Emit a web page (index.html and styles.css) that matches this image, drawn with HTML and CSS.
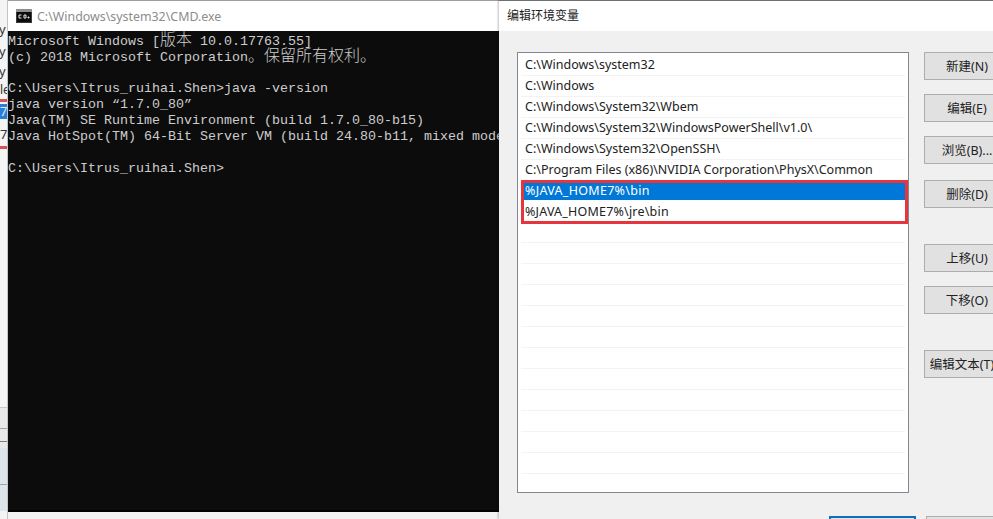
FILE: index.html
```html
<!DOCTYPE html>
<html lang="zh">
<head>
<meta charset="utf-8">
<title>CMD and environment variables</title>
<link rel="stylesheet" href="styles.css">
</head>
<body>
<div class="desk">
  <div class="sliver">
    <div class="sl-band"></div>
    <div class="sl-rule sl-g0"></div>
    <div class="sl-rule sl-g1"></div>
    <div class="sl-rule sl-g2"></div>
    <div class="sl-rule sl-g3"></div>
    <div class="sl sl-a">y</div>
    <div class="sl sl-b">y</div>
    <div class="sl sl-c">y</div>
    <div class="sl sl-d">le</div>
    <div class="sl-red sl-red1"></div>
    <div class="sl sl-sel">7</div>
    <div class="sl sl-e">7</div>
    <div class="sl-red sl-red2"></div>
  </div>
  <div class="cmd">
    <div class="cmd-title">
      <svg class="cmd-icon" width="16" height="16" viewBox="0 0 16 16"><rect x="0" y="1" width="16" height="14" fill="#3a3a3a"/><rect x="0" y="1" width="16" height="3" fill="#8f8f8f"/><rect x="1" y="4" width="14" height="10" fill="#0c0c0c"/><path d="M5.5 7H3v3h2.5M8 7h2v3H8zM12 9h1v1h-1z" fill="none" stroke="#e8e8e8" stroke-width="1"/></svg>
      <span class="cmd-name">C:\Windows\system32\CMD.exe</span>
    </div>
    <div class="term">
      <div class="ln ln-cjk">Microsoft Windows [<span class="cjk">版本</span> 10.0.17763.55]</div>
      <div class="ln ln-cjk">(c) 2018 Microsoft Corporation<span class="cjk">。保留所有权利。</span></div>
      <div class="ln">&nbsp;</div>
      <div class="ln">C:\Users\Itrus_ruihai.Shen&gt;java -version</div>
      <div class="ln">java version “1.7.0_80”</div>
      <div class="ln">Java(TM) SE Runtime Environment (build 1.7.0_80-b15)</div>
      <div class="ln">Java HotSpot(TM) 64-Bit Server VM (build 24.80-b11, mixed mode)</div>
      <div class="ln">&nbsp;</div>
      <div class="ln">C:\Users\Itrus_ruihai.Shen&gt;</div>
    </div>
    <div class="cmd-foot"></div>
  </div>
  <div class="dialog">
    <div class="dlg-title">编辑环境变量</div>
    <div class="dlg-body">
      <div class="main">
        <div class="list">
          <div class="row">C:\Windows\system32</div>
          <div class="row">C:\Windows</div>
          <div class="row">C:\Windows\System32\Wbem</div>
          <div class="row">C:\Windows\System32\WindowsPowerShell\v1.0\</div>
          <div class="row">C:\Windows\System32\OpenSSH\</div>
          <div class="row">C:\Program Files (x86)\NVIDIA Corporation\PhysX\Common</div>
          <div class="marked">
            <div class="row sel">%JAVA_HOME7%\bin</div>
            <div class="row plain">%JAVA_HOME7%\jre\bin</div>
          </div>
          <div class="row"></div><div class="row"></div><div class="row"></div><div class="row"></div>
          <div class="row"></div><div class="row"></div><div class="row"></div><div class="row"></div>
          <div class="row"></div><div class="row"></div><div class="row"></div><div class="row"></div>
          <div class="row"></div>
        </div>
        <div class="side">
          <div class="btn">新建(N)</div>
          <div class="btn">编辑(E)</div>
          <div class="btn">浏览(B)...</div>
          <div class="btn gap1">删除(D)</div>
          <div class="btn gap2">上移(U)</div>
          <div class="btn">下移(O)</div>
          <div class="btn gap2 btn-long">编辑文本(T)</div>
        </div>
      </div>
      <div class="foot">
        <div class="fbtn ok"></div>
        <div class="fbtn cancel"></div>
      </div>
    </div>
  </div>
</div>
</body>
</html>
```
FILE: styles.css
```css
* { box-sizing: border-box; }
html, body { margin: 0; padding: 0; height: 100%; overflow: hidden; background: #f0f0f0; }
.desk { display: flex; width: 993px; height: 519px; overflow: hidden; font-family: "Noto Sans", "Noto Sans CJK SC", sans-serif; }

.sliver { position: relative; width: 8px; flex: none; background: #f4f4f4; border-right: 1px solid #c4c4c4; overflow: hidden; }
.sl { position: absolute; left: -1px; font: 13px/16px "Noto Sans", sans-serif; color: #333; white-space: nowrap; }
.sl-a { top: 21px; } .sl-b { top: 43px; } .sl-c { top: 63px; }
.sl-d { top: 82px; font-size: 12px; left: 0; }
.sl-sel { top: 104px; left: 0; height: 15px; width: 8px; background: #2a7fd6; color: #dfeeff; line-height: 14px; }
.sl-e { top: 126px; left: 0; }
.sl-red { position: absolute; left: 0; width: 8px; background: #d8525a; }
.sl-red1 { top: 99px; height: 3px; }
.sl-red2 { top: 146px; height: 3px; }
.sl-band { position: absolute; left: 0; top: 407px; width: 8px; height: 104px; background: linear-gradient(#e9e9e9 0, #e9e9e9 41px, #dde4ec 41px, #dde4ec 100%); }
.sl-rule { position: absolute; left: 0; width: 8px; height: 1px; background: #a6a6a6; }
.sl-g0 { top: 407px; background: #c8c8c8; }
.sl-g1 { top: 428px; }
.sl-g2 { top: 441px; background: #7c7c7c; }
.sl-g3 { top: 484px; background: #98a4b0; }

.cmd { width: 491px; flex: none; display: flex; flex-direction: column; background: #0c0c0c; }
.cmd-title { height: 31px; flex: none; background: #fff; display: flex; align-items: center; padding-left: 8px; gap: 5px; border-top: 1px solid #9d9d9d; }
.cmd-icon { flex: none; }
.cmd-name { font-size: 12.4px; color: #8c8c8c; white-space: nowrap; }
.term { flex: 1; padding: 2px 0 0 0; overflow: hidden; font-family: "Liberation Mono", "Noto Sans CJK SC", monospace; font-size: 13.33px; line-height: 16px; color: #cccccc; }
.ln { height: 16px; white-space: pre; }
.ln-cjk { padding-top: 1px; }
.cjk { font-family: "Noto Sans CJK SC", sans-serif; font-size: 16px; font-weight: 300; line-height: 0; }
.cmd-foot { height: 9px; flex: none; background: #f2f2f2; border-top: 2px solid #000; }

.dialog { flex: 1; min-width: 0; display: flex; flex-direction: column; background: #f0f0f0; box-shadow: -1px 0 2px rgba(0,0,0,.25); border-top: 1px solid #6f6f6f; }
.dlg-title { height: 30px; flex: none; background: #fff; padding: 6px 0 0 8px; font-size: 12px; line-height: 18px; color: #222; }
.dlg-body { flex: 1; padding: 21px 0 0 18px; display: flex; flex-direction: column; overflow: hidden; }
.main { display: flex; gap: 15px; }
.list { width: 392px; height: 441px; flex: none; background: #fff; border: 1px solid #828790; padding: 2px 3px 0; overflow: hidden; }
.row { height: 21px; padding-left: 4px; font-size: 12.5px; line-height: 20px; color: #222; border-bottom: 1px solid #f3f3f3; white-space: nowrap; }
.marked { outline: 3px solid #e6353c; outline-offset: -1px; margin: 1px -1px 0 2px; height: 40px; position: relative; }
.row.sel { height: 18px; line-height: 17px; padding-left: 2px; background: #0078d7; color: #fff; border: 0; letter-spacing: .3px; }
.row.plain { height: 22px; padding-left: 2px; border: 0; line-height: 23px; background: #fff; letter-spacing: .2px; }

.side { flex: 1; min-width: 0; display: flex; flex-direction: column; gap: 14px; }
.btn { width: 86px; height: 28px; flex: none; background: #e1e1e1; border: 1px solid #adadad; font-size: 12.5px; line-height: 28px; color: #222; text-align: center; white-space: nowrap; }
.btn-long { padding-right: 10px; }
.gap1 { margin-top: 2px; }
.gap2 { margin-top: 22px; }
.foot { flex: none; display: flex; gap: 10px; margin-top: 23px; padding-left: 312px; }
.fbtn { height: 24px; flex: none; }
.ok { width: 87px; background: #e1e1e1; border: 2px solid #0f6fbd; }
.cancel { width: 90px; background: #e1e1e1; border: 1px solid #adadad; }
```
